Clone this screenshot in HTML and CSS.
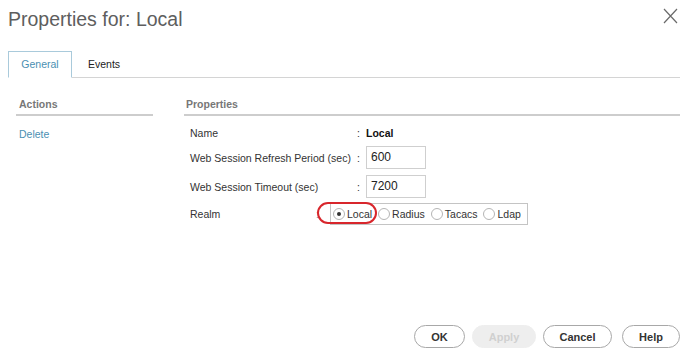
FILE: index.html
```html
<!DOCTYPE html>
<html lang="en">
<head>
    <meta charset="UTF-8">
    <meta name="viewport" content="width=device-width, initial-scale=1.0">
    <title>Properties for: Local</title>
    <link rel="stylesheet" href="styles.css">
</head>
<body>
    <div class="dialog">
        <div class="head">
            <h1>Properties for: Local</h1>
            <span class="close">
                <svg width="15" height="16" viewBox="0 0 15 16"><path d="M1 1L14 15M14 1L1 15" stroke="#6a6a6a" stroke-width="1.2" fill="none"/></svg>
            </span>
        </div>

        <div class="tabs">
            <span class="tab active">General</span>
            <span class="tab">Events</span>
        </div>

        <div class="content">
            <div class="actions">
                <h2>Actions</h2>
                <a class="link">Delete</a>
            </div>
            <div class="props">
                <h2>Properties</h2>
                <div class="row row-name">
                    <span class="label">Name</span>
                    <span class="colon">:</span>
                    <b class="value">Local</b>
                </div>
                <div class="row row-input">
                    <span class="label">Web Session Refresh Period (sec)</span>
                    <span class="colon">:</span>
                    <span class="field">600</span>
                </div>
                <div class="row row-input">
                    <span class="label">Web Session Timeout (sec)</span>
                    <span class="colon">:</span>
                    <span class="field">7200</span>
                </div>
                <div class="row row-realm">
                    <span class="label realm-label">Realm</span>
                    <span class="colon realm-colon">:</span>
                    <div class="radios">
                        <span class="radio checked"><i></i>Local</span>
                        <span class="radio"><i></i>Radius</span>
                        <span class="radio"><i></i>Tacacs</span>
                        <span class="radio"><i></i>Ldap</span>
                    </div>
                    <span class="mark"></span>
                </div>
            </div>
        </div>

        <div class="buttons">
            <button class="btn btn-ok">OK</button>
            <button class="btn btn-apply" disabled>Apply</button>
            <button class="btn btn-cancel">Cancel</button>
            <button class="btn btn-help">Help</button>
        </div>
    </div>
</body>
</html>
```

FILE: styles.css
```css
body {
    margin: 0;
    font-family: "Liberation Sans", Arial, sans-serif;
    background-color: #fff;
    color: #333;
}

.dialog {
    height: 360px;
    display: flex;
    flex-direction: column;
}

/* title bar */
.head {
    height: 51px;
    display: flex;
    justify-content: space-between;
    padding: 0 4px 0 8px;
    box-sizing: border-box;
}

.head h1 {
    margin: 7px 0 0 0;
    font-size: 19.5px;
    line-height: 24px;
    font-weight: normal;
    color: #5e5e5e;
}

.close {
    margin-top: 8px;
    width: 15px;
    height: 16px;
}

/* tabs */
.tabs {
    display: flex;
    margin: 0 2px 0 8px;
    height: 26px;
    border-bottom: 1px solid #d4d4d4;
}

.tab {
    font-size: 10.5px;
    line-height: 26px;
    color: #222;
    padding-left: 16px;
}

.tab.active {
    width: 64px;
    box-sizing: border-box;
    padding: 0;
    text-align: center;
    color: #4a8fb2;
    border: 1px solid #a9cadb;
    border-bottom: 1px solid #fff;
    margin-bottom: -1px;
    height: 27px;
    line-height: 25px;
}

/* body */
.content {
    display: flex;
    margin-top: 16px;
    padding: 0 2px 0 16px;
}

.content h2 {
    margin: 0;
    font-size: 10.5px;
    line-height: 20px;
    color: #777;
    padding-left: 3px;
    border-bottom: 2px solid #cdcdcd;
}

.actions {
    width: 137px;
}

.link {
    display: block;
    margin: 12px 0 0 3px;
    font-size: 10.5px;
    color: #4a8fb2;
}

.props {
    flex: 1;
    margin-left: 31px;
}

.props h2 {
    padding-left: 2px;
}

.row {
    display: flex;
    align-items: center;
    padding-left: 6px;
    font-size: 10.5px;
}

.row-name {
    height: 18px;
    margin-top: 8px;
}

.row-input {
    height: 23px;
    margin-top: 4px;
}

.row-input + .row-input {
    margin-top: 6px;
}

.label {
    width: 167px;
}

.colon {
    width: 9px;
}

.value {
    color: #111;
}

.field {
    width: 60px;
    height: 23px;
    box-sizing: border-box;
    border: 1px solid #cfcfcf;
    padding-left: 4px;
    line-height: 21px;
    font-size: 12px;
    color: #222;
}

.row-realm {
    position: relative;
    height: 22px;
    margin-top: 5px;
}

.realm-label {
    width: 126px;
}

.realm-colon {
    width: 14px;
    color: #888;
}

.radios {
    display: flex;
    align-items: center;
    height: 22px;
    box-sizing: border-box;
    border: 1px solid #c4c4c4;
    padding-left: 2px;
    width: 198px;
}

.radio {
    display: flex;
    align-items: center;
    margin-right: 6px;
}

.radio i {
    width: 12px;
    height: 12px;
    box-sizing: border-box;
    border: 1px solid #b5b5b5;
    border-radius: 50%;
    margin-right: 2px;
    position: relative;
}

.radio.checked i::after {
    content: "";
    position: absolute;
    left: 3px;
    top: 3px;
    width: 4px;
    height: 4px;
    border-radius: 50%;
    background-color: #333;
}

/* red annotation round Local */
.mark {
    position: absolute;
    left: 133px;
    top: -1px;
    width: 60px;
    height: 22px;
    box-sizing: border-box;
    border: 2px solid #d8262c;
    border-radius: 11px;
}

/* footer buttons */
.buttons {
    margin-top: auto;
    display: flex;
    justify-content: flex-end;
    padding: 0 2px 12px 0;
}

.btn {
    height: 23px;
    border: 1px solid #a8a8a8;
    border-radius: 12px;
    background-color: #fff;
    font-family: "Liberation Sans", Arial, sans-serif;
    font-size: 11px;
    font-weight: bold;
    color: #333;
    margin-left: 7px;
    padding: 0;
}

.btn-ok { width: 51px; }
.btn-apply {
    width: 64px;
    background-color: #eee;
    border-color: #eee;
    color: #d0d0d0;
}
.btn-cancel { width: 69px; }
.btn-help { width: 58px; margin-left: 10px; }
```
